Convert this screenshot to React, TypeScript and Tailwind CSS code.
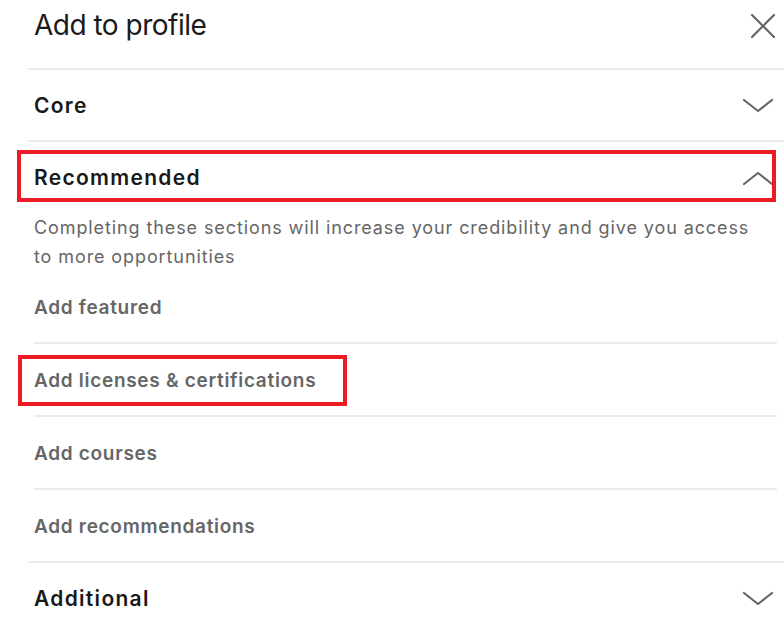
import React from 'react';

const Chevron = ({ up = false }: { up?: boolean }) => (
  <svg width="32" height="16" viewBox="0 0 32 16" fill="none" className="shrink-0">
    <polyline
      points={up ? '2,14 16,3 30,14' : '2,2 16,13 30,2'}
      stroke="#666666"
      strokeWidth="2.2"
      strokeLinecap="round"
      strokeLinejoin="round"
    />
  </svg>
);

const CloseIcon = () => (
  <svg width="26" height="26" viewBox="0 0 26 26" fill="none">
    <path d="M2 2L24 24M24 2L2 24" stroke="#666666" strokeWidth="2.2" strokeLinecap="round" />
  </svg>
);

const SectionDivider = () => <div className="ml-[28px] h-[2px] bg-[#ececec]" />;
const ItemDivider = () => <div className="ml-[34px] mr-[7px] h-[2px] bg-[#ececec]" />;

const SectionHeader = ({ title, open = false }: { title: string; open?: boolean }) => (
  <div className="flex h-[70px] items-center justify-between pl-[34px] pr-[10px] pt-[2px]">
    <span className="text-[21px] font-semibold tracking-[1.3px] text-[#191919]">{title}</span>
    <Chevron up={open} />
  </div>
);

const items = ['Add featured', 'Add licenses & certifications', 'Add courses', 'Add recommendations'];

export default function App() {
  return (
    <div
      className="relative h-[621px] w-[784px] overflow-hidden bg-white"
      style={{ fontFamily: 'Inter, "Liberation Sans", sans-serif' }}
    >
      {/* Header */}
      <div className="flex h-[68px] items-start justify-between pl-[34px] pr-[8px] pt-[7px]">
        <h1 className="text-[28px] leading-[36px] tracking-[-0.5px] text-[#1a1a1a]">Add to profile</h1>
        <div className="mt-[6px]">
          <CloseIcon />
        </div>
      </div>
      <SectionDivider />

      <SectionHeader title="Core" />
      <SectionDivider />

      {/* Recommended */}
      <div className="relative">
        <SectionHeader title="Recommended" open />
        <div className="pointer-events-none absolute left-[17px] right-[8px] top-[8px] h-[52px] border-[4px] border-[#ed1c24]" />
      </div>
      <p className="mt-[1px] pl-[34px] pr-[20px] text-[18px] leading-[29px] tracking-[0.9px] text-[#666666]">
        Completing these sections will increase your credibility and give you access to more opportunities
      </p>

      {items.map((label, i) => (
        <div key={label}>
          <div className="relative flex h-[71px] items-center pl-[34px] pt-[4px]">
            <span className="text-[19px] font-semibold tracking-[0.7px] text-[#666666]">{label}</span>
            {i === 1 && (
              <div className="pointer-events-none absolute left-[18px] top-[11px] h-[51px] w-[329px] border-[4px] border-[#ed1c24]" />
            )}
          </div>
          {i < items.length - 1 ? <ItemDivider /> : <SectionDivider />}
        </div>
      ))}

      <SectionHeader title="Additional" />
    </div>
  );
}
